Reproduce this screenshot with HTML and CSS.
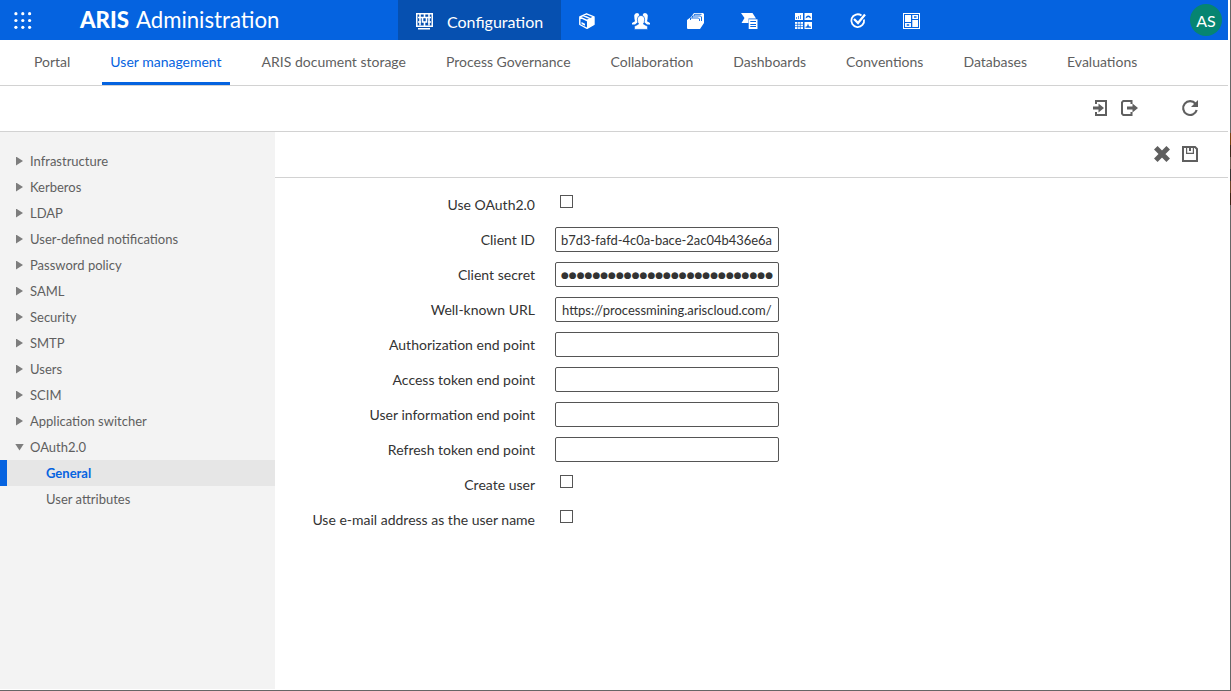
FILE: index.html
```html
<!DOCTYPE html>
<html lang="en">
<head>
<meta charset="utf-8">
<title>ARIS Administration</title>
<link rel="stylesheet" href="styles.css">
</head>
<body>
<div class="window">
<div class="app">
  <header class="topbar">
    <svg class="launcher" viewBox="0 0 18 18"><g fill="#fff"><circle cx="1.900" cy="1.700" r="1.600"/><circle cx="8.800" cy="1.700" r="1.600"/><circle cx="15.600" cy="1.700" r="1.600"/><circle cx="1.900" cy="8.500" r="1.600"/><circle cx="8.800" cy="8.500" r="1.600"/><circle cx="15.600" cy="8.500" r="1.600"/><circle cx="1.900" cy="15.300" r="1.600"/><circle cx="8.800" cy="15.300" r="1.600"/><circle cx="15.600" cy="15.300" r="1.600"/></g></svg>
    <h1 class="brand"><b>ARIS</b><span>Administration</span></h1>
    <nav class="apps">
      <a class="app-active"><svg class="ic" viewBox="0 0 16 16"><path fill="#fff" fill-rule="evenodd" d="M0 0h17v14H0zM1.500 1.500v11h14v-11z"/><path fill="none" stroke="#fff" stroke-width="1.600" d="M4 1v4M2 4.500h4M4 4.500v8M8.500 1v3M6.500 4.500h4v4.500h-4zM8.500 9v4M13 1v3.500M11 4.500h4M13 4.500v8M2 9h3M12 9h3"/><path fill="#fff" d="M2 15h12v1.500H2z"/></svg><span>Configuration</span></a>
      <a class="app-link"><svg class="ic" viewBox="0 0 16 16"><path fill="none" stroke="#fff" stroke-width="1.400" stroke-linejoin="round" d="M7.500 .8L15 3.800v7.700L8 15.300.8 11.500V4zM1 4.200l7 3.300 7-3.500M4.200 2.500l7 3.200"/><path fill="#fff" d="M8 7.500l7-3.500v7.500l-7 4zM2.500 9l3.500 1.700v2L2.500 11z"/></svg></a>
      <a class="app-link"><svg class="ic wide" viewBox="0 0 18 16"><path fill="#fff" d="M2.200 2.500Q2.500 0 5 0q2 0 2.300 2l-.8 2 .2 3L6 9l-3 2.500H0V10l3-1.700L2.500 6zM15.800 2.500Q15.500 0 13 0q-2 0-2.300 2l.8 2-.2 3 .7 2 3 2.500h3V10l-3-1.700.5-2.300z"/><path fill="#fff" stroke="#0563e0" stroke-width=".7" d="M5.300 6Q5.500 2.400 9 2.400T12.700 6l-.5 3.500-.8 1.500 4.200 2.300V16.400H2.400v-3.100L6.600 11l-.8-1.500z"/></svg></a>
      <a class="app-link"><svg class="ic wide nudge" viewBox="0 0 18 16"><path fill="#fff" d="M7 0h9l1 1v9l-4 6H1l-1-1V7l4-3z"/><path fill="none" stroke="#0563e0" stroke-width=".9" d="M3.500 7V5h8l1 1v4M5.500 4.500V3h8l1 1v4M7.500 2.500V1.300h7"/><path fill="#fff" d="M0 7h5l1 1h7v8H1l-1-1z"/></svg></a>
      <a class="app-link"><svg class="ic wide nudge" viewBox="0 0 18 16"><path fill="#fff" d="M0 0h11.500L15 5.500H7.500V10H.5l3-5z"/><path fill="#fff" d="M7.700 6.300H16.500V16H7.700z"/><path stroke="#0563e0" d="M9.300 8.500h5.700M9.300 11.500h5.700M9.300 13.500h5.700"/></svg></a>
      <a class="app-link"><svg class="ic wide nudge" viewBox="0 0 18 16"><path fill="#fff" d="M0 0h8v7H0zM9.500 0H17v7H9.500zM0 9h8v7H0zM9.500 9H17v7H9.500z"/><path fill="none" stroke="#0563e0" stroke-width=".7" d="M1.500 4v2M3.500 3v3M5.500 2v4M0 11.300h8M0 13.600h8M2.700 9v7M5.300 9v7"/><path fill="#0563e0" d="M10.500 5.500q.5-3 2.800-3t2.700 3l-2.700-1.500zM10.500 14.800v-1l1.500-.5 1-2.800 1 2.800 2 .5v1z"/></svg></a>
      <a class="app-link"><svg class="ic nudge" viewBox="0 0 16 16"><path fill="none" stroke="#fff" stroke-width="1.800" d="M11.500 2.500A6.400 6.400 0 1 0 14 6.500"/><path fill="none" stroke="#fff" stroke-width="2.300" d="M4 6l4 4 7-8.500"/></svg></a>
      <a class="app-link"><svg class="ic wide nudge" viewBox="0 0 18 16"><path fill="#fff" fill-rule="evenodd" d="M0 0h17v16H0zM1 1v14h15V1z"/><path fill="#fff" fill-rule="evenodd" d="M2 2h6v7H2zM9.300 2H15v4H9.300zM11 3.300v1.400h2.500V3.300zM2 10h6v4H2zM3.700 11.300v1.400h2.500v-1.400zM9.300 7H15v7H9.300z"/></svg></a>
    </nav>
    <div class="avatar">AS</div>
  </header>

  <nav class="tabs">
    <a>Portal</a><a class="selected">User management</a><a>ARIS document storage</a><a>Process Governance</a><a>Collaboration</a><a>Dashboards</a><a>Conventions</a><a>Databases</a><a>Evaluations</a>
  </nav>

  <div class="toolbar">
    <svg class="tool" viewBox="0 0 16 16"><path fill="none" stroke="#5f5f5f" stroke-width="2" d="M3 4V1h10v14H3v-3"/><path fill="#5f5f5f" d="M0 6.500h5.500V3.500L11 8l-5.500 4.500v-3H0z"/></svg>
    <svg class="tool import" viewBox="0 0 17 16"><path fill="none" stroke="#5f5f5f" stroke-width="2" d="M10.500 4V1H2.300L1 2.300V13.700L2.300 15h8.200v-3"/><path fill="#5f5f5f" d="M6 6.500h5.500V3.500L17 8l-5.500 4.500v-3H6z"/></svg>
    <svg class="tool refresh" viewBox="0 0 16 16"><path fill="none" stroke="#5f5f5f" stroke-width="2.200" d="M13.500 3.800A6.900 6.900 0 1 0 14.700 10"/><path fill="#5f5f5f" d="M16 0v7H9z"/></svg>
  </div>

  <div class="workspace">
    <aside class="tree">
      <a class="node">Infrastructure</a>
      <a class="node">Kerberos</a>
      <a class="node">LDAP</a>
      <a class="node">User-defined notifications</a>
      <a class="node">Password policy</a>
      <a class="node">SAML</a>
      <a class="node">Security</a>
      <a class="node">SMTP</a>
      <a class="node">Users</a>
      <a class="node">SCIM</a>
      <a class="node">Application switcher</a>
      <a class="node open">OAuth2.0</a>
      <a class="leaf current">General</a>
      <a class="leaf">User attributes</a>
    </aside>
    <main class="panel">
      <div class="actions">
        <svg class="tool" viewBox="0 0 16 16"><path stroke="#5f5f5f" stroke-width="5" d="M1.800 1.800l12.400 12.400M14.200 1.800L1.800 14.200"/></svg>
        <svg class="tool save" viewBox="0 0 16 16"><path fill="none" stroke="#5f5f5f" stroke-width="2" d="M1 1h12l2 2v12H1z"/><path fill="none" stroke="#5f5f5f" stroke-width="1.200" d="M4.600 1v6.400h6.800V1"/><path fill="#5f5f5f" d="M7 1h2v4H7z"/></svg>
      </div>
      <form class="form">
        <label>Use OAuth2.0</label><i class="check"></i>
        <label>Client ID</label><div class="field client-id">b7d3-fafd-4c0a-bace-2ac04b436e6a</div>
        <label>Client secret</label><div class="field secret">●●●●●●●●●●●●●●●●●●●●●●●●●●●</div>
        <label>Well-known URL</label><div class="field">https://processmining.ariscloud.com/</div>
        <label>Authorization end point</label><div class="field"></div>
        <label>Access token end point</label><div class="field"></div>
        <label>User information end point</label><div class="field"></div>
        <label>Refresh token end point</label><div class="field"></div>
        <label>Create user</label><i class="check"></i>
        <label>Use e-mail address as the user name</label><i class="check"></i>
      </form>
    </main>
  </div>
</div>
</div>
</body>
</html>
```
FILE: styles.css
```css
* { box-sizing: border-box; }
body { margin: 0; background: #fff; font-family: Lato, sans-serif; font-size: 14px; color: #5f5f5f; }
.window {
  width: 1231px; height: 691px; border-bottom: 1px solid #666; padding: 0 3px 1px 0; overflow: hidden;
  background: linear-gradient(#666 0 133px, #7a4312 133px 145px, #3d291e 145px 157px, #6e5a50 157px 169px, #363231 169px 181px, #6b4326 181px 193px, #3d2416 193px 205px, #666 205px) right / 1px 100% no-repeat;
}
.app { height: 100%; display: flex; flex-direction: column; }
svg { display: block; flex: none; overflow: visible; }
.topbar { height: 40px; flex: none; display: flex; align-items: center; background: #0563e0; color: #fff; }
.launcher { width: 18px; height: 18px; margin: 1px 0 0 14px; }
.brand { margin: 0 0 0 48px; width: 318px; display: flex; gap: 7px; font-size: 22.2px; font-weight: 400; line-height: 40px; white-space: nowrap; }
.brand b { font-weight: 900; }
.apps { display: flex; height: 40px; }
.app-active { width: 163px; display: flex; align-items: center; padding-left: 18px; gap: 15px; background: #0650b0; font-size: 16px; line-height: 20px; }
.app-active span { padding-top: 4px; }
.app-link { width: 54px; display: flex; align-items: center; justify-content: center; padding-right: 2px; }
.ic { width: 16px; height: 16px; margin-top: 2px; }
.ic.wide { width: 18px; }
.nudge { margin-left: 2px; }
.avatar { margin: 0 6px 0 auto; width: 32px; height: 32px; border-radius: 50%; background: #068571; font-size: 16px; line-height: 33px; text-align: center; }
.tabs { height: 46px; flex: none; display: flex; gap: 24px; padding-left: 26px; border-bottom: 1px solid #d2d2d2; }
.tabs a { padding: 0 8px; height: 45px; line-height: 44px; white-space: nowrap; }
.tabs .selected { color: #0563e0; border-bottom: 3px solid #0563e0; }
.toolbar, .actions { display: flex; align-items: center; justify-content: flex-end; height: 46px; flex: none; padding: 0 30px 1px 0; border-bottom: 1px solid #d2d2d2; }
.tool { width: 16px; height: 16px; }
.import { width: 17px; margin-left: 12px; }
.refresh { margin-left: 44px; }
.workspace { flex: 1; display: flex; min-height: 0; }
.tree { width: 275px; flex: none; padding-top: 16px; background: #f3f3f3; font-size: 13px; line-height: 26px; }
.node { display: flex; align-items: center; gap: 7px; height: 26px; padding-left: 16px; }
.node::before { content: ""; width: 7px; height: 9px; background: #7d7d7d; clip-path: polygon(0 0, 100% 50%, 0 100%); }
.node.open { gap: 6px; padding-left: 15px; }
.node.open::before { width: 9px; height: 7px; clip-path: polygon(0 0, 100% 0, 50% 100%); }
.leaf { display: block; height: 26px; padding-left: 46px; }
.current { background: #e6e6e6; border-left: 7px solid #0563e0; padding-left: 39px; color: #0563e0; font-weight: 700; }
.panel { flex: 1; }
.save { margin-left: 12px; }
.form { display: grid; grid-template-columns: 260px 224px; grid-auto-rows: 35px; column-gap: 20px; padding-top: 9px; color: #333; }
.form label { text-align: right; line-height: 35px; white-space: nowrap; }
.field { height: 25px; margin-top: 5px; padding: 0 6px; border: 1px solid #555; border-radius: 2px; font-size: 13px; line-height: 25px; white-space: nowrap; overflow: hidden; }
.client-id { font-size: 12.950px; padding-left: 5px; }
.secret { font-family: "DejaVu Sans", sans-serif; font-size: 9px; line-height: 24px; padding-left: 5px; }
.check { width: 13px; height: 13px; margin: 8px 0 0 5px; border: 1px solid #555; }
```
